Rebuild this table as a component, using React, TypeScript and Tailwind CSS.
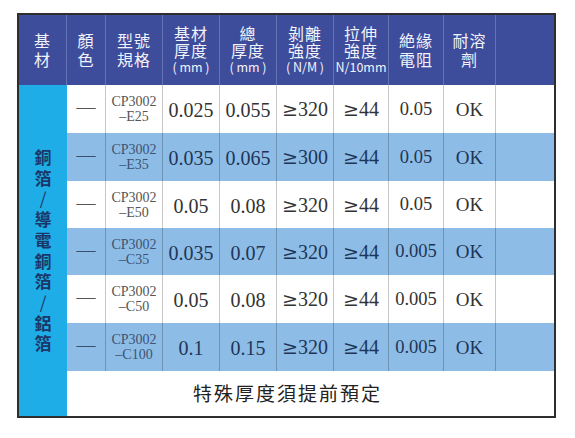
import React from "react";

const rows = [
  { code: "E25", a: "0.025", b: "0.055", c: "320", d: "44", e: "0.05", blue: false },
  { code: "E35", a: "0.035", b: "0.065", c: "300", d: "44", e: "0.05", blue: true },
  { code: "E50", a: "0.05", b: "0.08", c: "320", d: "44", e: "0.05", blue: false },
  { code: "C35", a: "0.035", b: "0.07", c: "320", d: "44", e: "0.005", blue: true },
  { code: "C50", a: "0.05", b: "0.08", c: "320", d: "44", e: "0.005", blue: false },
  { code: "C100", a: "0.1", b: "0.15", c: "320", d: "44", e: "0.005", blue: true },
];

const cjk = { fontFamily: '"Noto Sans CJK TC", "Noto Sans", sans-serif' };
const serif = { fontFamily: '"Liberation Serif", "Times New Roman", serif' };

function H({ lines, sub, last }: { lines: string[]; sub?: string; last?: boolean }) {
  return (
    <div
      className={`flex flex-col items-center justify-center text-center text-[#f2f3fa] ${last ? "" : "border-r border-[#6673b3]"}`}
      style={cjk}
    >
      {lines.map((l, i) => (
        <div key={i} className={`text-[16px] tracking-[1px] ${sub ? "leading-[17px]" : "leading-[19px]"}`}>
          {l}
        </div>
      ))}
      {sub && <div className="text-[12.5px] leading-[16px] whitespace-nowrap">{sub}</div>}
    </div>
  );
}

export default function App() {
  return (
    <div className="w-[575px] h-[438px] bg-white pt-[13px] pl-[17px]">
      <div className="w-[539px] h-[405px] border-2 border-[#2e2e2e] bg-white grid grid-cols-[48px_39px_57px_57px_57px_57px_55px_55px_52px_58px] grid-rows-[70px_48px_48px_47px_47px_48px_48px_45px]">
        <div className="bg-[#3e4d9b] col-span-10 grid grid-cols-subgrid">
          <H lines={["基", "材"]} />
          <H lines={["顏", "色"]} />
          <H lines={["型號", "規格"]} />
          <H lines={["基材", "厚度"]} sub="( mm )" />
          <H lines={["總", "厚度"]} sub="( mm )" />
          <H lines={["剝離", "強度"]} sub="( N/M )" />
          <H lines={["拉伸", "強度"]} sub="N/10mm" />
          <H lines={["絶緣", "電阻"]} />
          <H lines={["耐溶", "劑"]} />
          <H lines={[]} last />
        </div>
        <div
          className="row-span-7 bg-[#1fade8] flex flex-col items-center justify-center text-[#1b3768] text-[17px] leading-[20.7px] font-bold"
          style={cjk}
        >
          {["銅", "箔", "/", "導", "電", "銅", "箔", "/", "鋁", "箔"].map((c, i) => (
            <div key={i} className={c === "/" ? "font-normal" : ""}>
              {c}
            </div>
          ))}
        </div>
        {rows.map((r, i) => {
          const bg = r.blue ? "bg-[#8dbde6] text-[#1e3558]" : "bg-white text-[#333333]";
          const cell = `${bg} flex flex-col items-center justify-center text-center border-r border-[#00000038]`;
          return (
            <div key={i} className="col-span-9 grid grid-cols-subgrid">
              <div className={cell} style={serif}>
                <span className={`text-[19px] leading-none -mt-[5px] ${r.blue ? "text-[#3a4f6e]" : "text-[#555555]"}`}>—</span>
              </div>
              <div className={cell} style={serif}>
                <div className={`text-[14px] leading-[15px] ${r.blue ? "text-[#3d5274]" : "text-[#555555]"}`}>CP3002</div>
                <div className={`text-[14px] leading-[15px] ${r.blue ? "text-[#3d5274]" : "text-[#555555]"}`}>–{r.code}</div>
              </div>
              <div className={cell} style={serif}>
                <span className="text-[20px] leading-none mt-[2px]">{r.a}</span>
              </div>
              <div className={cell} style={serif}>
                <span className="text-[20px] leading-none mt-[2px]">{r.b}</span>
              </div>
              <div className={cell} style={serif}>
                <span className="text-[20px] leading-none whitespace-nowrap">
                  <span style={{ fontFamily: '"DejaVu Serif", serif' }} className="text-[19px]">≥</span>
                  {r.c}
                </span>
              </div>
              <div className={cell} style={serif}>
                <span className="text-[20px] leading-none whitespace-nowrap">
                  <span style={{ fontFamily: '"DejaVu Serif", serif' }} className="text-[19px]">≥</span>
                  {r.d}
                </span>
              </div>
              <div className={cell} style={serif}>
                <span className="text-[18.5px] leading-none">{r.e}</span>
              </div>
              <div className={cell} style={serif}>
                <span className="text-[19px] leading-none">OK</span>
              </div>
              <div className={`${bg}`} />
            </div>
          );
        })}
        <div className="col-span-9 flex items-center pl-[126px] bg-white">
          <span className="text-[19px] tracking-[2px] text-[#222222] font-normal" style={cjk}>
            特殊厚度須提前預定
          </span>
        </div>
      </div>
    </div>
  );
}
